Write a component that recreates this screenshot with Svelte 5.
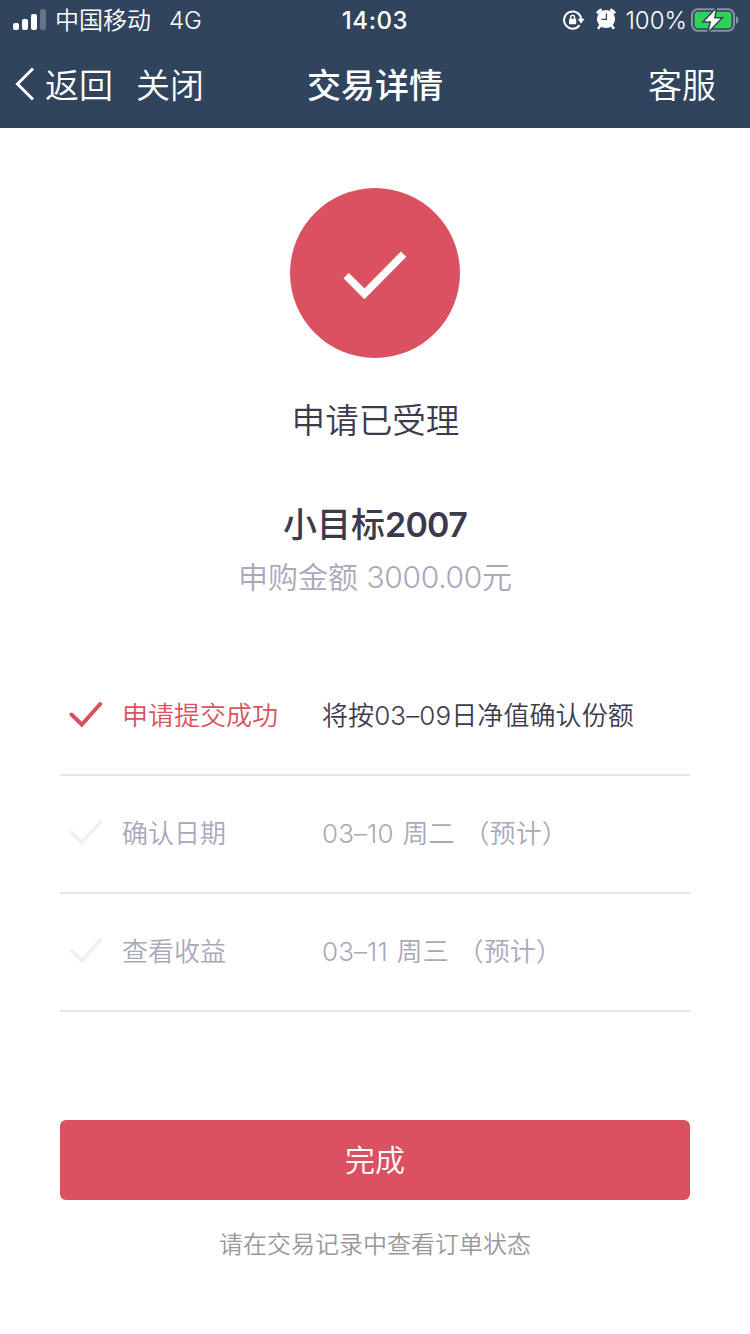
<script lang="ts">
    type Step = { label: string; value: string; note?: string; active: boolean };

    const steps: Step[] = [
        { label: "申请提交成功", value: "将按03–09日净值确认份额", active: true },
        { label: "确认日期", value: "03–10 周二", note: "（预计）", active: false },
        { label: "查看收益", value: "03–11 周三", note: "（预计）", active: false },
    ];
</script>

<header>
    <div class="status">
        <div class="side">
            <svg class="signal" width="34" height="22" viewBox="0 0 34 22" fill="#fff">
                <rect x="0" y="14" width="6" height="7" rx="2" />
                <rect x="9" y="10" width="6" height="11" rx="2" />
                <rect x="18" y="5" width="6" height="16" rx="2" />
                <rect x="27" y="0" width="6" height="21" rx="2" opacity="0.25" />
            </svg>
            <span class="carrier">中国移动</span>
            <span class="network">4G</span>
        </div>
        <div class="time">14:03</div>
        <div class="side right">
            <svg class="lock" width="22" height="20" viewBox="0 0 22 20">
                <path d="M16.6 15.2A8.6 8.6 0 1 1 18.2 9" fill="none" stroke="#fff" stroke-width="2" />
                <path d="M14.6 8.7h7L18 13.7z" fill="#fff" />
                <rect x="6" y="8.8" width="7.2" height="5.4" rx="0.8" fill="#fff" />
                <path d="M7.7 9V7.2a1.9 1.9 0 0 1 3.8 0V9" fill="none" stroke="#fff" stroke-width="1.4" />
            </svg>
            <svg class="alarm" width="20" height="22" viewBox="0 0 20 22">
                <circle cx="10" cy="11" r="9.1" fill="#fff" />
                <path d="M1.9 4.4 4.6 2.2M18.1 4.4 15.4 2.2" stroke="#fff" stroke-width="3" stroke-linecap="round" />
                <path d="M4.4 17.4 2.6 20M15.6 17.4 17.4 20" stroke="#fff" stroke-width="2.6" stroke-linecap="round" />
                <path d="M10.4 5.4v6H5.4" fill="none" stroke="#31445e" stroke-width="1.3" />
            </svg>
            <span class="percent">100%</span>
            <svg class="battery" width="48" height="24" viewBox="0 0 48 24">
                <rect x="1" y="1.2" width="42" height="21.6" rx="6" fill="none" stroke="#8793a3" stroke-width="2" />
                <rect x="3.6" y="3.8" width="36.8" height="16.4" rx="3.4" fill="#31d158" />
                <path d="M45 8.2c3.2 1.2 3.2 6.4 0 7.6z" fill="#8793a3" />
                <path class="bolt" d="M24.4 1.8 13.6 13.2h6.6L18 22.4 29.6 10.4H23z" />
            </svg>
        </div>
    </div>
    <nav>
        <div class="links">
            <svg class="chevron" width="20" height="34" viewBox="0 0 20 34">
                <path d="M18 1.5 2.5 17 18 32.5" fill="none" stroke="#fff" stroke-width="3" />
            </svg>
            <span class="back">返回</span>
            <span class="close">关闭</span>
        </div>
        <h1>交易详情</h1>
        <span class="service">客服</span>
    </nav>
</header>

<main>
    <div class="badge">
        <svg width="170" height="170" viewBox="0 0 170 170">
            <path d="m56.2 87.6 18.2 18.2 39.2-39.6" fill="none" stroke="#fff" stroke-width="7.6" />
        </svg>
    </div>
    <p class="result">申请已受理</p>
    <h2>小目标<span>2007</span></h2>
    <p class="amount">申购金额 <span>3000.00</span>元</p>

    <ul>
        {#each steps as step}
            <li class:active={step.active}>
                <svg width="34" height="28" viewBox="0 0 34 28">
                    <path d="m2.5 14.5 10.3 10L31.2 4" fill="none" stroke="currentColor" stroke-width="4" stroke-linecap="round" />
                </svg>
                <span class="label">{step.label}</span>
                <span class="value">{step.value} {step.note ?? ""}</span>
            </li>
        {/each}
    </ul>

    <button>完成</button>
    <p class="hint">请在交易记录中查看订单状态</p>
</main>

<style>
    :global(body) {
        background: #fff;
    }

    :global(#app) {
        font-family: Inter, "Noto Sans CJK SC", sans-serif;
        font-weight: 350;
        color: #3d3a4e;
    }

    header {
        height: 128px;
        background: #31445e;
        color: #fff;
    }

    .status {
        display: grid;
        grid-template-columns: 1fr auto 1fr;
        align-items: center;
        height: 40px;
        padding: 0 11px 0 13px;
        font-size: 24px;
        line-height: 40px;
    }

    .side {
        display: flex;
        align-items: center;
    }

    .carrier,
    .network,
    .time,
    .percent {
        padding-top: 2px;
        line-height: 38px;
    }

    .right {
        justify-content: flex-end;
    }

    .signal {
        margin-right: 8px;
    }

    .network {
        margin-left: 18px;
    }

    .time {
        margin-right: 2px;
        font-weight: 550;
        letter-spacing: 0.6px;
    }

    .alarm {
        margin: -2px 9px 0 11px;
    }

    .battery {
        margin-left: 4px;
    }

    .bolt {
        fill: #fff;
        stroke: #31445e;
        stroke-width: 3px;
        paint-order: stroke;
    }

    nav {
        display: grid;
        grid-template-columns: 1fr auto 1fr;
        align-items: center;
        height: 88px;
        padding: 0 15px;
        font-size: 34px;
        line-height: 48px;
    }

    .links {
        display: flex;
        align-items: center;
    }

    .back,
    .close,
    .service,
    h1 {
        padding-top: 3px;
    }

    .back {
        margin: 0 23px 0 10px;
    }

    h1 {
        margin: 0;
        font-size: 34px;
        font-weight: 500;
    }

    .service {
        padding-right: 19px;
        text-align: right;
    }

    main {
        display: flex;
        flex-direction: column;
        align-items: center;
        padding: 60px 60px 0;
    }

    p,
    h2 {
        margin: 0;
    }

    .badge {
        width: 170px;
        height: 170px;
        border-radius: 50%;
        background: #da5261;
    }

    .result {
        margin-top: 39px;
        padding-left: 1px;
        font-size: 33.6px;
        line-height: 48px;
    }

    h2 {
        margin-top: 56px;
        font-size: 34px;
        font-weight: 500;
        line-height: 48px;
    }

    h2 span {
        font-weight: 560;
        letter-spacing: -0.7px;
    }

    .amount {
        margin-top: 7px;
        font-size: 30px;
        line-height: 42px;
        color: #aaa8ba;
    }

    .amount span {
        letter-spacing: -0.3px;
    }

    ul {
        width: 100%;
        margin: 60px 0 0;
        padding: 0;
        list-style: none;
    }

    li {
        display: flex;
        align-items: center;
        box-sizing: border-box;
        height: 118px;
        padding: 0 0 4px 9px;
        border-bottom: 2px solid #e4e4ec;
        font-size: 26px;
        color: #f0f0f1;
    }

    .label,
    .value {
        padding-bottom: 2px;
        color: #aaa8ba;
    }

    .label {
        width: 200px;
        margin-left: 19px;
    }

    .value {
        letter-spacing: 0.1px;
        word-spacing: 1.4px;
    }

    .active,
    .active .label {
        color: #da5261;
    }

    .active .value {
        color: #3d3a4e;
    }

    button {
        width: 100%;
        height: 80px;
        margin-top: 108px;
        padding: 0 0 5px;
        border: 0;
        border-radius: 6px;
        background: #da5261;
        color: #fff;
        font: inherit;
        font-size: 30px;
    }

    .hint {
        margin-top: 28px;
        font-size: 24px;
        line-height: 34px;
        color: #999;
    }
</style>
